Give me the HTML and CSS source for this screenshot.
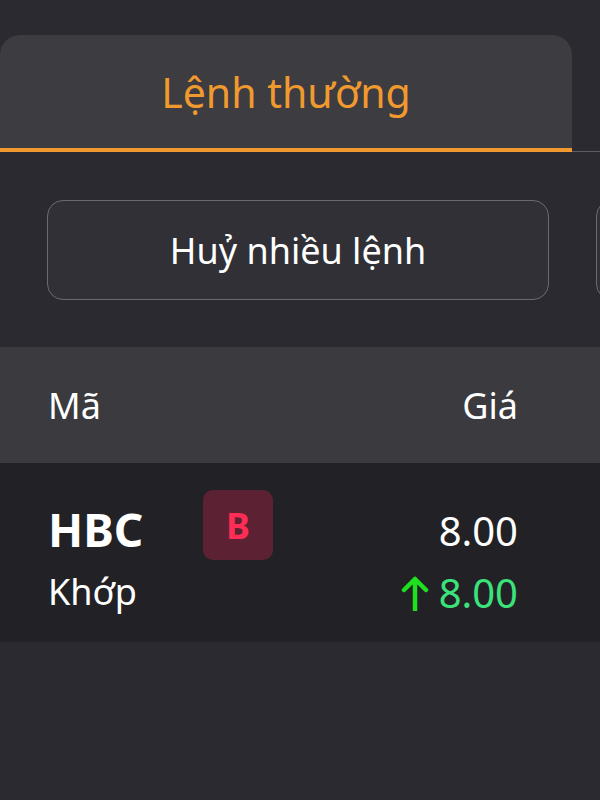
FILE: index.html
```html
<!DOCTYPE html>
<html lang="vi">
<head>
  <meta charset="UTF-8">
  <meta name="viewport" content="width=device-width, initial-scale=1.0">
  <title>Lệnh thường</title>
  <link rel="stylesheet" href="styles.css">
</head>
<body>
  <div class="tabs">
    <div class="tab active">Lệnh thường</div>
  </div>

  <div class="actions">
    <button class="action-btn">Huỷ nhiều lệnh</button>
    <button class="action-btn" aria-label="Sửa nhiều lệnh"></button>
  </div>

  <div class="order-table">
    <div class="table-head">
      <span>Mã</span>
      <span>Giá</span>
    </div>
    <div class="order-row">
      <div class="symbol">
        <div class="code">HBC</div>
        <div class="status">Khớp</div>
      </div>
      <div class="side side-buy">B</div>
      <div class="prices">
        <div class="price">8.00</div>
        <div class="price matched">
          <svg class="arrow" width="28" height="36" viewBox="0 0 28 36">
            <path d="M14 35V4M3 15L14 4l11 11" fill="none" stroke="#1fe01f" stroke-width="4.5" stroke-linecap="round" stroke-linejoin="round"/>
          </svg>
          8.00
        </div>
      </div>
    </div>
  </div>
</body>
</html>
```

FILE: styles.css
```css
body {
  margin: 0;
  background-color: #2a2a30;
  font-family: "Noto Sans", "Open Sans", sans-serif;
  color: #fff;
  overflow: hidden;
}
.tabs {
  display: flex;
  padding-top: 35px;
  border-bottom: 1px solid #5c5c62;
}
.tab {
  width: 572px;
  height: 113px;
  margin-bottom: -1px;
  background-color: #3c3c41;
  border-radius: 20px 20px 0 0;
  border-bottom: 4px solid #f0992e;
  color: #f0992e;
  font-size: 41px;
  display: flex;
  align-items: center;
  justify-content: center;
}
.actions {
  display: flex;
  gap: 47px;
  padding: 48px 0 0 47px;
  overflow: hidden;
}
.action-btn {
  flex: 0 0 502px;
  height: 100px;
  background-color: #303036;
  border: 1px solid #6a6a70;
  border-radius: 16px;
  color: #fff;
  font-family: inherit;
  font-size: 36px;
  padding: 0;
}
.order-table {
  margin-top: 47px;
}
.table-head {
  height: 116px;
  display: flex;
  align-items: center;
  justify-content: space-between;
  padding: 0 82px 0 48px;
  background-color: #3a3a3f;
  font-size: 36px;
}
.order-row {
  height: 179px;
  box-sizing: border-box;
  display: flex;
  align-items: flex-start;
  padding: 29px 82px 0 48px;
  background-color: #222226;
}
.symbol {
  width: 155px;
}
.code {
  font-size: 46px;
  font-weight: bold;
  line-height: 74px;
}
.status {
  font-size: 36px;
  line-height: 52px;
}
.side {
  width: 70px;
  height: 70px;
  margin-top: -2px;
  border-radius: 10px;
  display: flex;
  align-items: center;
  justify-content: center;
  font-size: 36px;
  font-weight: bold;
}
.side-buy {
  background-color: #5c2233;
  color: #ff2d55;
}
.prices {
  margin-left: auto;
  padding-top: 3px;
  text-align: right;
}
.price {
  font-size: 40px;
  line-height: 72px;
}
.price.matched {
  color: #3be37a;
  line-height: 52px;
  display: flex;
  align-items: center;
  gap: 10px;
}
```
